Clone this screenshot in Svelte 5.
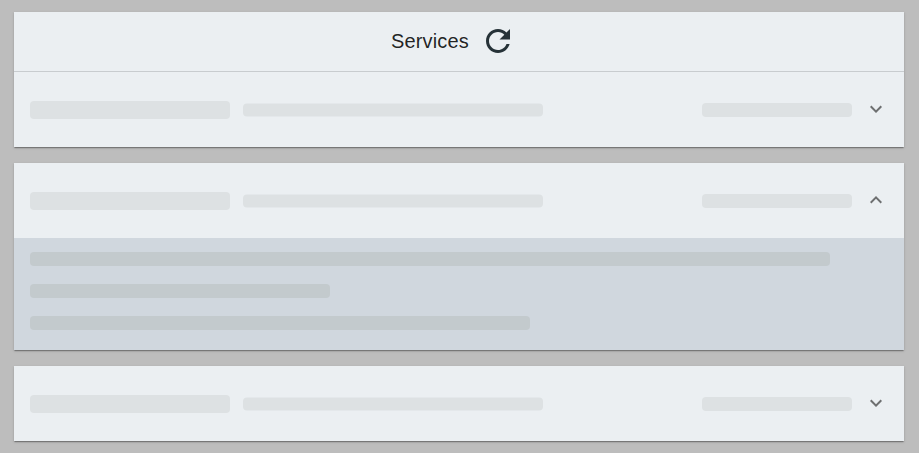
<script>
  const panels = [
    { header: true, open: false },
    { header: false, open: true },
    { header: false, open: false },
  ];
  const lines = [800, 300, 500];
</script>

<main>
  {#each panels as panel}
    <section class="card">
      {#if panel.header}
        <header>
          <h6>Services</h6>
          <button aria-label="Refresh">
            <svg width="36" height="36" viewBox="0 0 24 24">
              <path d="M17.65 6.35C16.2 4.9 14.21 4 12 4c-4.42 0-7.99 3.58-7.99 8s3.57 8 7.99 8c3.73 0 6.84-2.55 7.73-6h-2.08c-.82 2.33-3.04 4-5.65 4-3.31 0-6-2.69-6-6s2.69-6 6-6c1.66 0 3.14.69 4.22 1.78L13 11h7V4l-2.35 2.35z" />
            </svg>
          </button>
        </header>
      {/if}
      <div class="summary">
        <span class="bone name"></span>
        <span class="bone description"></span>
        <span class="bone status"></span>
        <svg class="chevron" width="24" height="24" viewBox="0 0 24 24">
          {#if panel.open}
            <path d="M12 8l-6 6 1.41 1.41L12 10.83l4.59 4.58L18 14z" />
          {:else}
            <path d="M16.59 8.59L12 13.17 7.41 8.59 6 10l6 6 6-6z" />
          {/if}
        </svg>
      </div>
      {#if panel.open}
        <div class="details">
          {#each lines as width}
            <span class="bone line" style="width: {width}px"></span>
          {/each}
        </div>
      {/if}
    </section>
  {/each}
</main>

<style>
  :global(body) {
    background: #bdbdbd;
  }

  main {
    box-sizing: border-box;
    height: 453px;
    padding: 12px 15px 12px 14px;
    display: flex;
    flex-direction: column;
    gap: 16px;
    background: #bdbdbd;
    font-family: "Liberation Sans", Arial, sans-serif;
  }

  .card {
    background: #ebeff2;
    box-shadow:
      0 2px 1px -1px rgba(0, 0, 0, 0.2),
      0 1px 1px 0 rgba(0, 0, 0, 0.14),
      0 1px 3px 0 rgba(0, 0, 0, 0.12);
  }

  header {
    height: 59px;
    display: flex;
    align-items: center;
    justify-content: center;
    border-bottom: 1px solid #c8cccf;
  }

  h6 {
    margin: 0 0 2px;
    font-size: 20px;
    font-weight: 400;
    line-height: 32px;
    letter-spacing: 0.15px;
    color: rgba(0, 0, 0, 0.87);
  }

  button {
    display: flex;
    padding: 11px 11px 12px;
    border: 0;
    background: none;
  }

  button svg {
    fill: #263238;
  }

  .summary {
    box-sizing: border-box;
    height: 75px;
    padding: 0 16px;
    display: flex;
    align-items: center;
  }

  .bone {
    display: block;
    border-radius: 4px;
    background: #dde1e3;
  }

  .name {
    width: 200px;
    height: 18px;
    margin: 1px 13px 0 0;
  }

  .description {
    width: 300px;
    height: 22px;
    border-radius: 4px / 6.7px;
    transform: scaleY(0.6);
  }

  .status {
    width: 150px;
    height: 14px;
    margin-left: auto;
    margin-right: 12px;
  }

  .chevron {
    fill: #6d6f70;
    margin-top: -1px;
  }

  .details {
    box-sizing: border-box;
    height: 112px;
    padding: 14px 16px;
    display: flex;
    flex-direction: column;
    gap: 18px;
    background: #d0d7de;
  }

  .line {
    height: 14px;
    background: #c3cacd;
  }
</style>
